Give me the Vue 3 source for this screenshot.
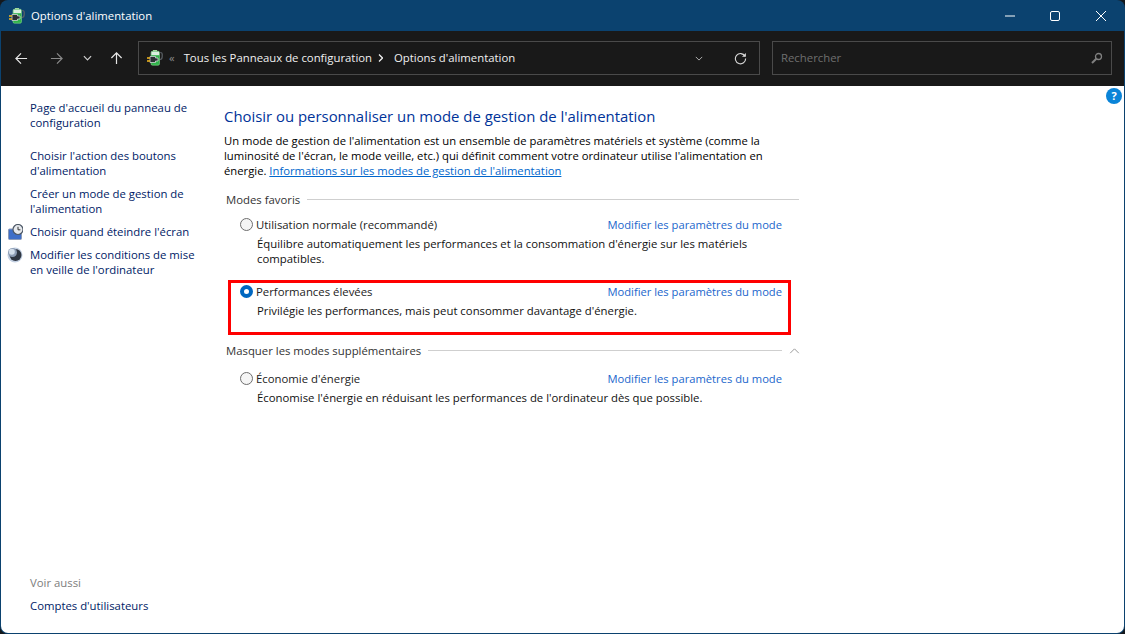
<template>
  <div class="window">
    <header class="titlebar">
      <svg class="app-icon" viewBox="0 0 16 16"><use href="#power-icon" /></svg>
      <span class="title">Options d'alimentation</span>
      <div class="caption">
        <svg viewBox="0 0 10 10"><path d="M0 5h10" /></svg>
        <svg viewBox="0 0 10 10"><rect x=".5" y=".5" width="9" height="9" rx="1.500" /></svg>
        <svg viewBox="0 0 10 10"><path d="M0 0l10 10M10 0L0 10" /></svg>
      </div>
    </header>

    <div class="toolbar">
      <nav class="nav-buttons">
        <svg class="nav on" viewBox="0 0 14 14"><path d="M13 7H1M6.500 1.500L1 7l5.500 5.500" /></svg>
        <svg class="nav off" viewBox="0 0 14 14"><path d="M1 7h12M7.500 1.500L13 7l-5.500 5.500" /></svg>
        <svg class="nav small" viewBox="0 0 10 6"><path d="M1 1l4 4 4-4" /></svg>
        <svg class="nav on" viewBox="0 0 14 14"><path d="M7 13V1M1.500 6.500L7 1l5.500 5.500" /></svg>
      </nav>
      <div class="address">
        <svg class="app-icon" viewBox="0 0 16 16"><use href="#power-icon" /></svg>
        <span class="crumb-more">«</span>
        <span class="crumb">Tous les Panneaux de configuration</span>
        <svg class="crumb-sep" viewBox="0 0 5 8"><path d="M1 .5L4.500 4 1 7.500" /></svg>
        <span class="crumb">Options d'alimentation</span>
        <svg class="addr-drop" viewBox="0 0 10 6"><path d="M1 1l4 4 4-4" /></svg>
        <svg class="refresh" viewBox="0 0 14 14">
          <path d="M11.800 4.500A5.500 5.500 0 1 0 12.500 7" />
          <path class="solid" d="M12.800 1v4.200H8.600z" />
        </svg>
      </div>
      <div class="search">
        <span class="placeholder">Rechercher</span>
        <svg viewBox="0 0 12 12"><circle cx="7.500" cy="4.500" r="3" /><path d="M5.300 6.700L1 11" class="thick" /></svg>
      </div>
    </div>

    <div class="body">
      <aside class="sidebar">
        <div class="side-links">
          <a class="home">Page d'accueil du panneau de configuration</a>
          <a v-for="link in sideLinks" :key="link.text" class="side-link">
            <svg v-if="link.icon === 'screen'" class="side-icon" viewBox="0 0 16 16">
              <rect x="1.500" y="5" width="13" height="10.500" rx="1" fill="#3f6fc8" stroke="#8a9ab8" />
              <circle cx="11" cy="5.500" r="5" fill="#e6e9ed" stroke="#4d5866" stroke-width="1.200" />
              <path d="M11 2.800v3h2.400" fill="none" stroke="#333" />
            </svg>
            <svg v-else-if="link.icon === 'moon'" class="side-icon" viewBox="0 0 16 16">
              <circle cx="8" cy="8" r="7.500" fill="#c3d0e2" />
              <circle cx="8.500" cy="8" r="6" fill="#2f3642" />
              <circle cx="5.500" cy="5.500" r="4.500" fill="#8c9cb4" />
              <circle cx="4.800" cy="4.800" r="3" fill="#d3deeb" />
            </svg>
            <span>{{ link.text }}</span>
          </a>
        </div>
        <div class="see-also">
          <span class="see-title">Voir aussi</span>
          <a>Comptes d'utilisateurs</a>
        </div>
      </aside>

      <main class="main">
        <h1>Choisir ou personnaliser un mode de gestion de l'alimentation</h1>
        <p class="intro">
          Un mode de gestion de l'alimentation est un ensemble de paramètres matériels et système (comme la
          luminosité de l'écran, le mode veille, etc.) qui définit comment votre ordinateur utilise l'alimentation en
          énergie. <a class="info">Informations sur les modes de gestion de l'alimentation</a>
        </p>

        <div class="group-head">
          <span>Modes favoris</span>
          <i class="rule" />
        </div>
        <section
          v-for="plan in favourites"
          :key="plan.name"
          class="plan"
          :class="{ selected: plan.selected }"
        >
          <div class="plan-row">
            <span class="radio" />
            <span class="plan-name">{{ plan.name }}</span>
            <a class="plan-link">Modifier les paramètres du mode</a>
          </div>
          <p class="plan-desc">{{ plan.desc }}</p>
          <div v-if="plan.selected" class="red-box" />
        </section>

        <div class="group-head more">
          <span>Masquer les modes supplémentaires</span>
          <i class="rule" />
          <svg viewBox="0 0 12 7"><path d="M1 6l5-5 5 5" /></svg>
        </div>
        <section class="plan">
          <div class="plan-row">
            <span class="radio" />
            <span class="plan-name">Économie d'énergie</span>
            <a class="plan-link">Modifier les paramètres du mode</a>
          </div>
          <p class="plan-desc">Économise l'énergie en réduisant les performances de l'ordinateur dès que possible.</p>
        </section>
      </main>

      <span class="help">?</span>
    </div>

    <svg class="defs" width="0" height="0">
      <defs>
        <symbol id="power-icon" viewBox="0 0 16 16">
          <path d="M9.500 9.500H13q2.200 0 2.200-3V4q0-1.500-2-1.500" fill="none" stroke="#5c6268" stroke-width="1.200" />
          <rect x="6" y="0" width="4" height="1.500" fill="#a9dca0" />
          <rect x="4" y="1.200" width="8.500" height="14" rx="1.500" fill="#2fb34a" stroke="#86d68f" stroke-width=".6" />
          <rect x="4.400" y="1.600" width="7.700" height="3.600" fill="#dcefe0" />
          <path d="M3 6.500h5.500v1.500h2.500v3H8.500v1.500H3z" fill="#2b2f33" stroke="#e3e6e9" stroke-width=".7" />
          <path d="M0 8h3M0 11h3" stroke="#f3b81f" stroke-width="1.300" />
        </symbol>
      </defs>
    </svg>
  </div>
</template>

<script setup>
const sideLinks = [
  { text: "Choisir l'action des boutons d'alimentation" },
  { text: "Créer un mode de gestion de l'alimentation" },
  { text: "Choisir quand éteindre l'écran", icon: "screen" },
  { text: "Modifier les conditions de mise en veille de l'ordinateur", icon: "moon" },
];

const favourites = [
  {
    name: "Utilisation normale (recommandé)",
    desc: "Équilibre automatiquement les performances et la consommation d'énergie sur les matériels compatibles.",
  },
  {
    name: "Performances élevées",
    desc: "Privilégie les performances, mais peut consommer davantage d'énergie.",
    selected: true,
  },
];
</script>

<style>
html,
body {
  margin: 0;
  background: #14181c;
}
</style>

<style scoped>
.window {
  display: flex;
  flex-direction: column;
  height: 100vh;
  box-sizing: border-box;
  padding: 0 1px 1px;
  overflow: hidden;
  border-radius: 8px;
  background: #0b426f;
  font-family: "Open Sans", "Noto Sans", sans-serif;
  font-size: 11.35px;
  color: #000;
}

.titlebar {
  display: flex;
  align-items: center;
  flex: 0 0 31px;
  padding-left: 8px;
  color: #fff;
}
.app-icon {
  width: 16px;
  height: 16px;
  flex: none;
}
.title {
  margin-left: 6px;
}
.caption {
  display: flex;
  gap: 35px;
  margin-left: auto;
  padding-right: 18px;
}
.caption svg {
  width: 10px;
  height: 10px;
  fill: none;
  stroke: #fff;
}
.caption svg:last-child {
  margin-left: 1px;
}

.toolbar {
  display: flex;
  align-items: center;
  flex: 0 0 55px;
  box-sizing: border-box;
  padding: 0 12px 1px 14px;
  background: #191919;
}
.nav-buttons {
  display: flex;
  align-items: center;
  width: 123px;
  gap: 20px;
}
.nav {
  width: 13px;
  height: 13px;
  fill: none;
  stroke-width: 1.300;
}
.nav.on {
  stroke: #e6e6e6;
}
.nav.off {
  margin-left: 2px;
  stroke: #8a8a8a;
}
.nav.small {
  width: 9px;
  height: 6px;
  margin-right: -2px;
  stroke: #d0d0d0;
}

.address,
.search {
  display: flex;
  align-items: center;
  height: 34px;
  box-sizing: border-box;
  border: 1px solid #4a4a4a;
  color: #f0f0f0;
}
.address {
  flex: 0 0 622px;
  padding-left: 8px;
}
.crumb {
  padding-bottom: 2px;
}
.crumb-more {
  margin: 0 9px 2px 6px;
  color: #8a8a8a;
}
.crumb-sep {
  width: 5px;
  height: 8px;
  margin: 0 11px 0 6px;
  fill: none;
  stroke: #f0f0f0;
  stroke-width: 1.300;
}
.addr-drop {
  width: 8px;
  height: 5px;
  margin-left: auto;
  fill: none;
  stroke: #d0d0d0;
}
.refresh {
  width: 13px;
  height: 13px;
  margin: 0 12px 0 31px;
  fill: none;
  stroke: #d8d8d8;
  stroke-width: 1.200;
}
.refresh .solid {
  fill: #d8d8d8;
  stroke: none;
}
.search {
  flex: 0 0 340px;
  margin-left: 12px;
  padding: 0 8px;
  color: #6f6f6f;
  justify-content: space-between;
}
.placeholder {
  padding-bottom: 2px;
}
.search svg {
  width: 12px;
  height: 12px;
  fill: none;
  stroke: #808080;
  stroke-width: 1.300;
}
.search .thick {
  stroke-width: 2;
}

.body {
  position: relative;
  display: flex;
  flex: 1;
  min-height: 0;
  background: #fff;
  border-bottom-left-radius: 7px;
  border-bottom-right-radius: 7px;
}

.sidebar {
  display: flex;
  flex-direction: column;
  justify-content: space-between;
  flex: 0 0 223px;
  box-sizing: border-box;
  padding: 14px 17px 20px 29px;
  color: #001b66;
  line-height: 15px;
}
.side-links {
  display: flex;
  flex-direction: column;
  gap: 8px;
}
.side-links .home {
  margin-bottom: 10px;
}
.side-link {
  position: relative;
}
.side-icon {
  position: absolute;
  left: -23px;
  top: 0;
  width: 16px;
  height: 16px;
}
.see-also {
  display: flex;
  flex-direction: column;
  gap: 8px;
}
.see-title {
  color: #7d7d7d;
}

.main {
  flex: 0 0 575px;
  padding-top: 20px;
  line-height: 15px;
}
h1 {
  margin: 0 0 7px;
  font-size: 14.900px;
  font-weight: 400;
  line-height: 20px;
  color: #003399;
}
.intro {
  margin: 0;
  font-size: 11.270px;
}
.info {
  color: #0066cc;
  text-decoration: underline;
}

.group-head {
  display: flex;
  align-items: center;
  gap: 7px;
  margin: 14px 0 10px 2px;
  color: #333;
}
.rule {
  flex: 1;
  height: 1px;
  background: #cfcfcf;
}
.group-head.more {
  margin-top: 15px;
  margin-bottom: 13px;
}
.group-head svg {
  width: 11px;
  height: 6px;
  margin-right: -1px;
  fill: none;
  stroke: #8a8a8a;
}

.plan {
  position: relative;
  margin-bottom: 18px;
  padding-left: 16px;
}
.plan.selected {
  margin-bottom: 0;
  padding-bottom: 10px;
}
.plan-row {
  display: flex;
  align-items: center;
  height: 15px;
}
.radio {
  flex: none;
  box-sizing: border-box;
  width: 13px;
  height: 13px;
  margin-right: 3px;
  border: 1px solid #6e6e6e;
  border-radius: 50%;
  background: #f5f5f5;
}
.selected .radio {
  border: 4px solid #0067c0;
  background: #fff;
}
.plan-name {
  color: #222;
}
.plan-link {
  margin-left: auto;
  padding-right: 17px;
  font-size: 11.2px;
  color: #1a66cc;
}
.plan-desc {
  margin: 4px 40px 0 17px;
  color: #111;
}
.red-box {
  position: absolute;
  inset: -4px 8px -7px 4px;
  border: 3px solid #f00;
  pointer-events: none;
}

.help {
  position: absolute;
  right: 2px;
  top: 2px;
  width: 16px;
  height: 16px;
  border-radius: 50%;
  background: #0a84d8;
  color: #fff;
  font-size: 11px;
  font-weight: 700;
  line-height: 16px;
  text-align: center;
}
.defs {
  position: absolute;
}
</style>
